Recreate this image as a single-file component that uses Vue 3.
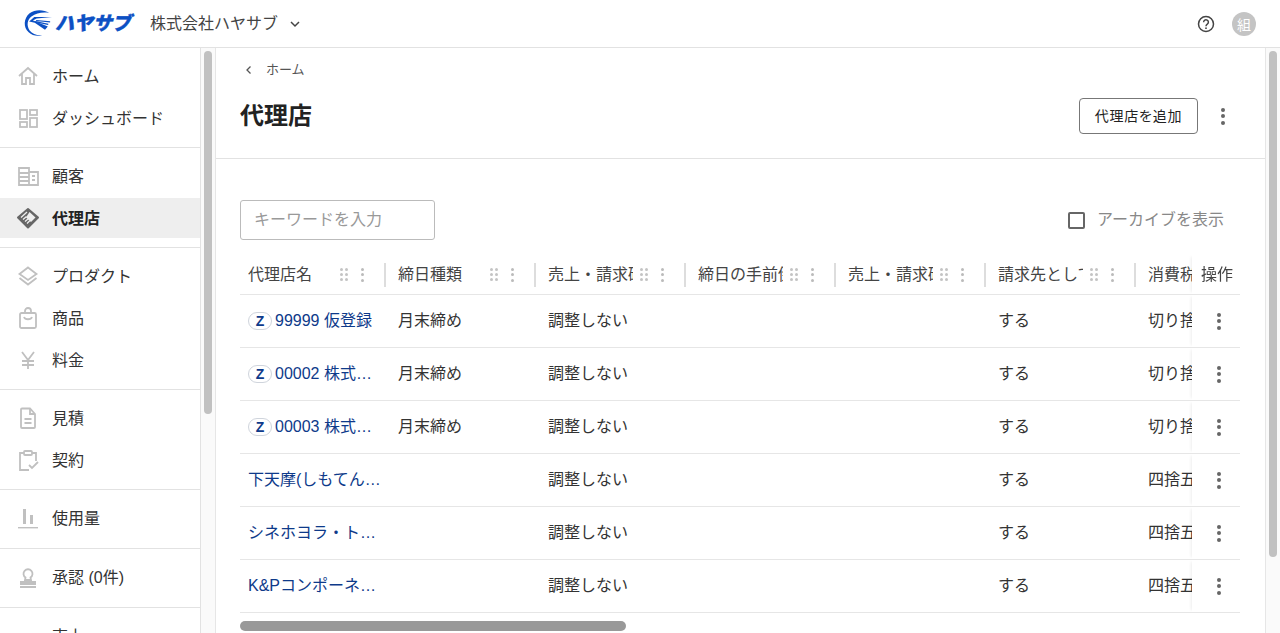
<template>
  <div class="app">
    <header class="topbar">
      <div class="logo">
        <svg class="logo-mark" viewBox="0 0 32 30" width="30" height="28">
          <path d="M28 4C22 .5 13 0 7 4.500 .5 10 0 19.500 6 25c4 4 10 4.500 14.500 3-5.500.5-10.500-1-13.500-5C3.500 17.500 4.500 11.500 9 8 14 4 21 3 28 4z" fill="#0c50c4" />
          <path d="M31 8.500 12 8.700 6.500 13.500l6 1.200 11 7.500 3-3.500-13.500-5.700L10.500 12.300l4-2z" fill="#0c50c4" />
          <path d="M13 13.500l14 3M14 12.300l15 1.500" stroke="#0c50c4" stroke-width="1.300" fill="none" />
        </svg>
        <span class="logo-text">ハヤサブ</span>
      </div>
      <div class="company">
        <span class="company-name">株式会社ハヤサブ</span>
        <svg viewBox="0 0 12 12" width="12" height="12"><path d="M2 4l4 4 4-4" fill="none" stroke="#444" stroke-width="1.500" /></svg>
      </div>
      <div class="top-right">
        <svg viewBox="0 0 18 18" width="18" height="18">
          <circle cx="9" cy="9" r="7.500" fill="none" stroke="#444" stroke-width="1.500" />
          <path d="M6.600 7.200a2.400 2.400 0 1 1 3.700 2c-.9.600-1.300 1-1.300 2" fill="none" stroke="#444" stroke-width="1.500" />
          <circle cx="9" cy="13.200" r=".9" fill="#444" />
        </svg>
        <div class="avatar">組</div>
      </div>
    </header>

    <div class="body">
      <aside class="sidebar">
        <div v-for="(group, i) in nav" :key="i" class="nav-group" :class="{ single: group.length === 1 }">
          <div v-for="item in group" :key="item.label" class="nav-item" :class="{ active: item.active }">
            <svg class="nav-icon" viewBox="0 0 24 24" width="24" height="24" v-html="icons[item.icon]"></svg>
            <span>{{ item.label }}</span>
          </div>
        </div>
      </aside>
      <div class="scroll-track side-track"><div class="thumb side-thumb"></div></div>

      <main class="main">
        <div class="page-head">
          <div class="crumb">
            <svg viewBox="0 0 10 10" width="10" height="10"><path d="M6.500 1.500 3 5l3.500 3.500" fill="none" stroke="#555" stroke-width="1.300" /></svg>
            <span>ホーム</span>
          </div>
          <div class="title-row">
            <h1>代理店</h1>
            <div class="title-actions">
              <button class="add-btn">代理店を追加</button>
              <span class="kebab dark"><i></i><i></i><i></i></span>
            </div>
          </div>
        </div>

        <div class="filters">
          <div class="search"><span>キーワードを入力</span></div>
          <label class="archive"><span class="check"></span><span>アーカイブを表示</span></label>
        </div>

        <div class="table">
          <div class="tr th">
            <div v-for="col in columns" :key="col" class="cell head-cell">
              <span class="head-name">{{ col }}</span>
              <span class="drag"><i v-for="n in 6" :key="n"></i></span>
              <span class="kebab light"><i></i><i></i><i></i></span>
              <span class="sep"></span>
            </div>
            <div class="cell op">操作</div>
          </div>
          <div v-for="row in rows" :key="row.name" class="tr">
            <div class="cell name-cell">
              <span v-if="row.z" class="z">Z</span>
              <a class="link" :style="{ maxWidth: row.w + 'px' }">{{ row.name }}</a>
            </div>
            <div class="cell">{{ row.close }}</div>
            <div class="cell">調整しない</div>
            <div class="cell"></div>
            <div class="cell"></div>
            <div class="cell">する</div>
            <div class="cell">{{ row.tax }}</div>
            <div class="cell op"><span class="kebab dark"><i></i><i></i><i></i></span></div>
          </div>
        </div>
        <div class="h-thumb"></div>
      </main>
      <div class="scroll-track main-track"><div class="thumb main-thumb"></div></div>
    </div>
  </div>
</template>

<script setup>
const icons = {
  home: '<path d="M3 12 12 4l9 8M6 10v10h4v-6h4v6h4V10" fill="none" stroke="currentColor" stroke-width="1.800"/>',
  dash: '<g fill="none" stroke="currentColor" stroke-width="1.800"><rect x="4" y="4" width="7" height="9"/><rect x="14" y="4" width="7" height="5"/><rect x="4" y="16" width="7" height="5"/><rect x="14" y="12" width="7" height="9"/></g>',
  customer: '<g fill="none" stroke="currentColor" stroke-width="1.800"><path d="M3 4h10v17H3zM13 8h9v13h-9z"/><path d="M3 9h10M3 13h10M3 17h10M16 12h3M16 16h3"/></g>',
  partner: '<path d="M12 3 22 11.500 12 21.500 2 11.500z" fill="currentColor" stroke="currentColor" stroke-width="2" stroke-linejoin="round"/><path d="M13.500 6 19.500 11.500 15 16 10 11.500z" fill="#eeeeee"/><path d="M5 11.500l6-5.500M7 13.500l3.500-3M9 15.500l3.500-3M11 17.500l3-3" fill="none" stroke="#eeeeee" stroke-width="1.300"/>',
  layers: '<g fill="none" stroke="currentColor" stroke-width="1.800"><path d="M12 3.500 20.500 10 12 16 3.500 10z"/><path d="M3.500 14 12 20.500 20.500 14"/></g>',
  bag: '<g fill="none" stroke="currentColor" stroke-width="1.800"><rect x="4" y="7" width="16" height="15" rx="1.500"/><path d="M9 7V5a3 3 0 0 1 6 0v2M8 11c1 3 7 3 8 0"/></g>',
  yen: '<path d="M6 4l6 8 6-8M12 12v9M6 13h12M6 17h12" fill="none" stroke="currentColor" stroke-width="1.800"/>',
  doc: '<g fill="none" stroke="currentColor" stroke-width="1.800"><path d="M5 3.500a1 1 0 0 1 1-1h8l5 5.500v13a1 1 0 0 1-1 1H6a1 1 0 0 1-1-1z"/><path d="M14 2.500V8h5M8.500 13h7M8.500 17h7"/></g>',
  contract: '<g fill="none" stroke="currentColor" stroke-width="1.800"><path d="M8 5H4v17h9M16 5h4v8"/><rect x="8" y="3" width="8" height="4" rx="1"/><path d="M13 17l3 3 6-6"/></g>',
  usage: '<g fill="currentColor"><rect x="2" y="21" width="20" height="1.400"/><rect x="7" y="3" width="3" height="15"/><rect x="14" y="9" width="3" height="9"/></g>',
  stamp: '<g fill="none" stroke="currentColor" stroke-width="1.800"><path d="M9.500 12.500a4.500 4.500 0 1 1 5 0L15 15H9z"/></g><path d="M4 16h16v4H4zM4 21h16v2H4z" fill="currentColor"/>',
  sales: '<path d="M4 20 12 12l4 4 5-6" fill="none" stroke="currentColor" stroke-width="1.800"/>',
}

const nav = [
  [{ label: 'ホーム', icon: 'home' }, { label: 'ダッシュボード', icon: 'dash' }],
  [{ label: '顧客', icon: 'customer' }, { label: '代理店', icon: 'partner', active: true }],
  [{ label: 'プロダクト', icon: 'layers' }, { label: '商品', icon: 'bag' }, { label: '料金', icon: 'yen' }],
  [{ label: '見積', icon: 'doc' }, { label: '契約', icon: 'contract' }],
  [{ label: '使用量', icon: 'usage' }],
  [{ label: '承認 (0件)', icon: 'stamp' }],
  [{ label: '売上', icon: 'sales' }],
]

const columns = ['代理店名', '締日種類', '売上・請求確定', '締日の手前倒し', '売上・請求確定', '請求先として', '消費税端数']

const rows = [
  { name: '99999 仮登録', z: true, close: '月末締め', tax: '切り捨て', w: 100 },
  { name: '00002 株式会社サンプル', z: true, close: '月末締め', tax: '切り捨て', w: 98 },
  { name: '00003 株式会社サンプル', z: true, close: '月末締め', tax: '切り捨て', w: 98 },
  { name: '下天摩(しもてんま)商事株式会社', close: '', tax: '四捨五入', w: 134 },
  { name: 'シネホヨラ・トレーディング', close: '', tax: '四捨五入', w: 129 },
  { name: 'K&Pコンポーネント株式会社', close: '', tax: '四捨五入', w: 129 },
]
</script>

<style scoped>
.app {
  height: 633px;
  overflow: hidden;
  display: flex;
  flex-direction: column;
  font-family: "Liberation Sans", "Noto Sans CJK JP", sans-serif;
  font-size: 16px;
  color: #333;
  background: #fff;
}

.topbar {
  height: 47px;
  flex: none;
  display: flex;
  align-items: center;
  padding: 0 24px 0 23px;
  border-bottom: 1px solid #e2e2e2;
}

.logo {
  display: flex;
  align-items: center;
  width: 127px;
  margin-top: -1px;
}

.logo-mark {
  flex: none;
}

.logo-text {
  margin-left: 2px;
  font-size: 19px;
  font-weight: 900;
  font-style: italic;
  color: #0c50c4;
  -webkit-text-stroke: 0.4px #0c50c4;
  white-space: nowrap;
  line-height: 1;
}

.company {
  display: flex;
  align-items: center;
  gap: 11px;
  color: #444;
}

.company-name {
  margin-top: -3px;
}

.top-right {
  margin-left: auto;
  display: flex;
  align-items: center;
  gap: 17px;
}

.avatar {
  width: 24px;
  height: 24px;
  border-radius: 50%;
  background: #c4c4c4;
  color: #fff;
  font-size: 14px;
  display: flex;
  align-items: center;
  justify-content: center;
}

.body {
  flex: 1;
  min-height: 0;
  display: flex;
}

.sidebar {
  width: 201px;
  box-sizing: border-box;
  flex: none;
  overflow: hidden;
  border-right: 1px solid #e2e2e2;
}

.nav-group {
  padding: 7px 0 8px;
  border-bottom: 1px solid #e2e2e2;
}

.nav-group.single {
  padding-bottom: 9px;
}

.nav-item {
  height: 42px;
  display: flex;
  align-items: center;
  gap: 12px;
  padding-left: 16px;
  color: #333;
  position: relative;
  z-index: 0;
}

.nav-item span {
  margin-top: -2px;
}

.nav-item.active {
  font-weight: 700;
  color: #222;
}

.nav-item.active::before {
  content: "";
  position: absolute;
  inset: 1px 0;
  background: #eeeeee;
  z-index: -1;
}

.nav-icon {
  color: #c0c0c0;
  flex: none;
}

.active .nav-icon {
  color: #666;
}

.scroll-track {
  flex: none;
  box-sizing: border-box;
  background: #fafafa;
}

.side-track {
  width: 15px;
  padding: 3px 3px 0 3px;
  border-right: 1px solid #e6e6e6;
}

.main-track {
  width: 15px;
  padding: 3px 3px 0 3px;
  border-left: 1px solid #e6e6e6;
}

.thumb {
  background: #c1c1c1;
  border-radius: 5px;
}

.side-thumb {
  height: 363px;
}

.main-thumb {
  height: 506px;
}

.main {
  flex: 1;
  min-width: 0;
  overflow: hidden;
}

.page-head {
  height: 110px;
  box-sizing: content-box;
  padding: 0 25px 0 24px;
  border-bottom: 1px solid #e2e2e2;
}

.crumb {
  height: 44px;
  display: flex;
  align-items: center;
  gap: 12px;
  padding-left: 4px;
  font-size: 13px;
  color: #555;
}

.crumb span {
  margin-top: -3px;
}

.crumb svg {
  margin-top: -1px;
}

.title-row {
  display: flex;
  align-items: center;
  justify-content: space-between;
  height: 48px;
}

h1 {
  margin: -5px 0 0;
  font-size: 24px;
  font-weight: 700;
  color: #222;
}

.title-actions {
  display: flex;
  align-items: center;
  gap: 16px;
}

.add-btn {
  width: 119px;
  height: 36px;
  padding: 0 0 2px;
  background: #fff;
  border: 1px solid #777;
  border-radius: 4px;
  font-family: inherit;
  font-size: 14px;
  font-feature-settings: "palt";
  letter-spacing: 0.8px;
  color: #222;
}

.kebab {
  width: 18px;
  display: inline-flex;
  flex-direction: column;
  align-items: center;
  gap: 2.500px;
  flex: none;
}

.kebab i {
  width: 4px;
  height: 4px;
  border-radius: 50%;
  background: #666;
}

.title-actions .kebab {
  margin-right: 8px;
}

.kebab.light {
  gap: 2.500px;
}

.kebab.light i {
  background: #bbb;
}

.filters {
  padding: 41px 41px 0 24px;
  display: flex;
  align-items: center;
  justify-content: space-between;
}

.search {
  width: 195px;
  height: 40px;
  box-sizing: border-box;
  border: 1px solid #bbb;
  border-radius: 3px;
  padding: 0 0 5px 13px;
  display: flex;
  align-items: center;
  color: #999;
}

.archive {
  display: flex;
  align-items: center;
  gap: 12px;
  color: #888;
}

.archive span:last-child {
  margin-top: -5px;
}

.check {
  width: 17px;
  height: 17px;
  box-sizing: border-box;
  border: 2px solid #666;
  border-radius: 2px;
}

.table {
  margin: 15px 25px 0 24px;
  overflow: hidden;
}

.tr {
  display: flex;
  width: max-content;
  min-width: 100%;
  height: 53px;
  box-sizing: border-box;
  border-bottom: 1px solid #e6e6e6;
}

.th {
  height: 40px;
}

.cell {
  width: 150px;
  flex: none;
  box-sizing: border-box;
  padding: 0 8px 5px;
  display: flex;
  align-items: center;
  white-space: nowrap;
  overflow: hidden;
  color: #333;
}

.th .cell {
  padding-bottom: 3px;
}

.head-cell {
  position: relative;
  color: #444;
  padding-right: 0;
}

.head-name {
  width: 85px;
  margin-right: 1px;
  overflow: hidden;
  flex: none;
}

.drag {
  display: grid;
  grid-template-columns: 3px 3px;
  gap: 2px 2px;
  margin: 3px 0 0 6px;
  flex: none;
}

.drag i {
  width: 3px;
  height: 3px;
  background: #c4c4c4;
  border-radius: 50%;
}

.head-cell .kebab {
  margin: 3px 0 0 5px;
}

.head-cell .kebab i {
  width: 3px;
  height: 3px;
}

.sep {
  position: absolute;
  left: 144px;
  top: 8px;
  bottom: 7px;
  width: 2px;
  background: #ddd;
}

.link {
  color: #0e3a8a;
  overflow: hidden;
  text-overflow: ellipsis;
  display: block;
}

.z {
  flex: none;
  width: 24px;
  height: 18px;
  margin: 5px 3px 0 0;
  box-sizing: border-box;
  border: 1px solid #cfd4dc;
  border-radius: 9px;
  display: flex;
  align-items: center;
  justify-content: center;
  color: #0e3a8a;
  font-size: 14px;
  font-weight: 700;
}

.op {
  position: sticky;
  right: 0;
  width: 48px;
  margin-left: auto;
  background: #fff;
  box-shadow: -3px 0 3px -2px rgba(0, 0, 0, 0.07);
  color: #444;
  padding-left: 9px;
}

.op .kebab {
  margin: 5px 0 0 9px;
}

.h-thumb {
  width: 386px;
  height: 10px;
  margin: 8px 0 0 24px;
  background: #999;
  border-radius: 5px;
}
</style>

<style>
html, body {
  margin: 0;
  overflow: hidden;
}
</style>
